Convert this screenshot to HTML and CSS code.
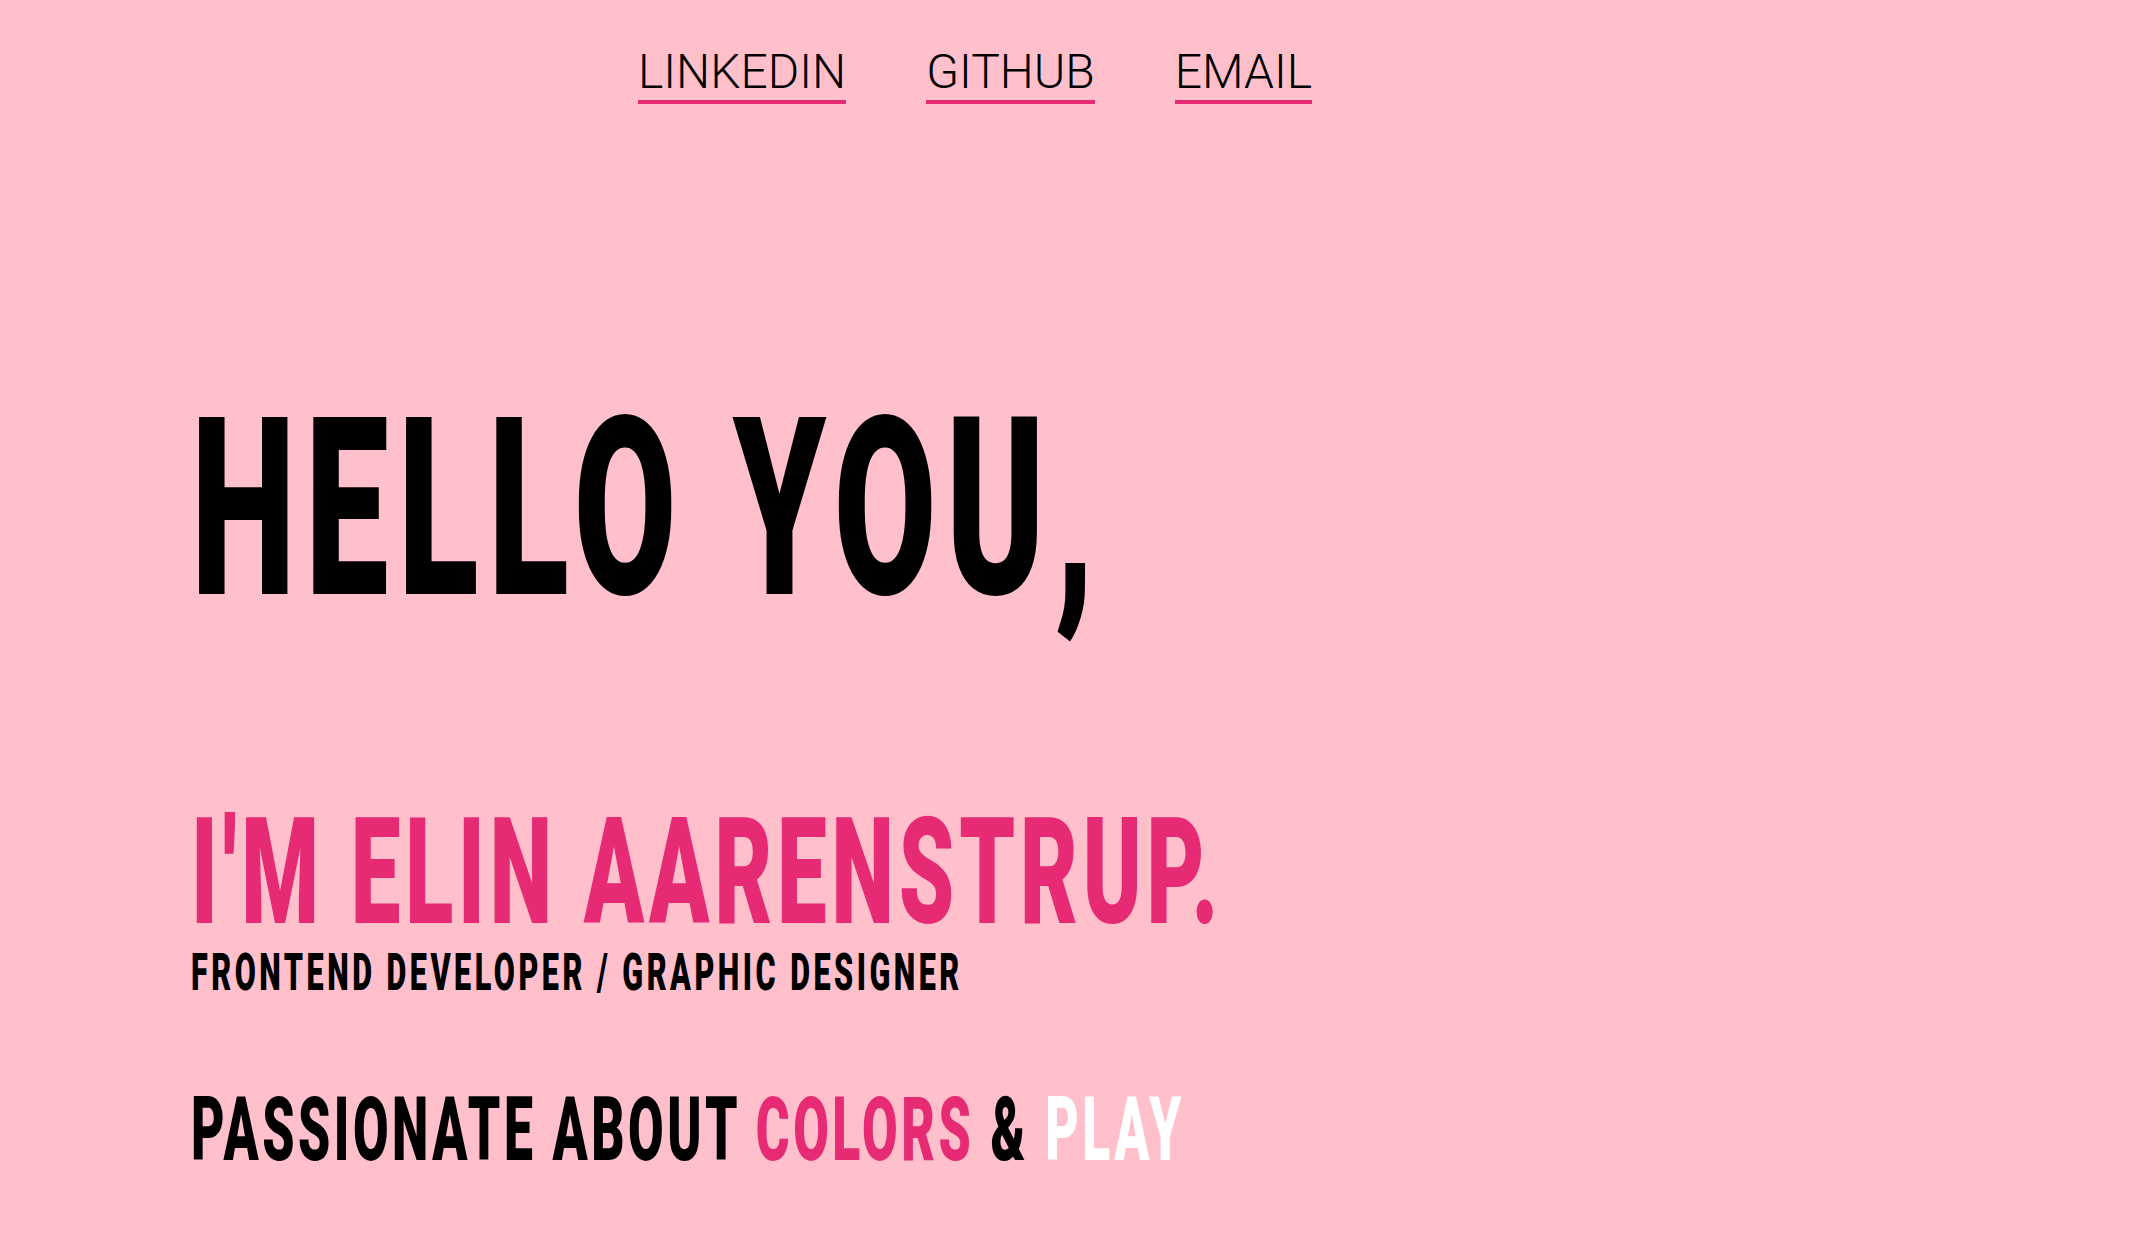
FILE: index.html
```html
<!DOCTYPE html>
<html lang="en">
<head>
<meta charset="utf-8">
<title>Elin Aarenstrup</title>
<link rel="stylesheet" href="styles.css">
</head>
<body>
<nav class="nav">
  <a class="nav-link" href="#">LINKEDIN</a>
  <a class="nav-link" href="#">GITHUB</a>
  <a class="nav-link" href="#">EMAIL</a>
</nav>
<main class="hero">
  <h1 class="hello"><span class="fit fit-hello">HELLO YOU,</span></h1>
  <h2 class="name"><span class="fit fit-name">I'M ELIN AARENSTRUP.</span></h2>
  <p class="role"><span class="fit fit-role">FRONTEND DEVELOPER / GRAPHIC DESIGNER</span></p>
  <p class="passion"><span class="fit fit-passion">PASSIONATE ABOUT <span class="accent">COLORS</span> &amp; <span class="light">PLAY</span></span></p>
</main>
</body>
</html>
```
FILE: styles.css
```css
html, body {
  margin: 0;
  padding: 0;
}
body {
  background: #ffc0cb;
  color: #000;
  font-family: Roboto, "Liberation Sans", sans-serif;
  min-height: 100vh;
}
.nav {
  display: flex;
  gap: 80px;
  padding: 43px 0 0 638px;
}
.nav-link {
  display: inline-block;
  font-family: Roboto, "Liberation Sans", sans-serif;
  font-weight: 300;
  font-size: 48px;
  line-height: normal;
  color: #000;
  text-decoration: none;
  border-bottom: 4px solid #e72a74;
}
.hero {
  padding-left: 191px;
  margin-top: 282px;
}
.hero h1, .hero h2, .hero p {
  margin: 0;
  font-family: Roboto, "Liberation Sans", sans-serif;
  font-weight: 900;
  line-height: 1;
  white-space: nowrap;
}
.fit {
  display: inline-block;
  transform-origin: left top;
}
.hello {
  font-size: 248px;
  letter-spacing: 16px;
}
.fit-hello {
  transform: scaleX(0.6);
}
.name {
  font-size: 148px;
  letter-spacing: 8px;
  color: #e72a74;
  margin-top: 165px !important;
}
.fit-name {
  transform: scaleX(0.6);
}
.role {
  font-size: 51px;
  letter-spacing: 5.8px;
  line-height: 47px !important;
  margin-top: 2px !important;
}
.fit-role {
  transform: scaleX(0.6);
}
.passion {
  font-size: 89px;
  letter-spacing: 6px;
  margin-top: 89px !important;
}
.fit-passion {
  transform: scaleX(0.58);
}
.accent {
  color: #e72a74;
}
.light {
  color: #fff;
}
```
